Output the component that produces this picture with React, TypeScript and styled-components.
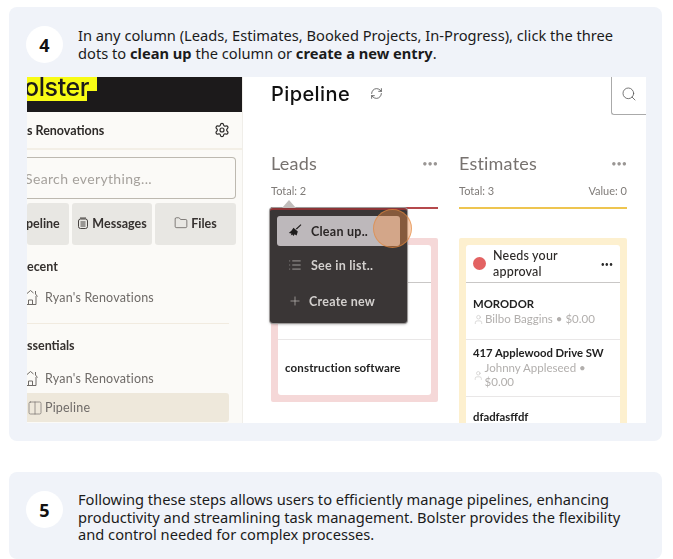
import React from 'react';
import styled, { createGlobalStyle } from 'styled-components';
import { Columns2, Folder, List, Plus, RefreshCw, Search, Settings, User } from 'lucide-react';

const GlobalStyle = createGlobalStyle`
  html, body {
    margin: 0;
    height: 559px;
    overflow: hidden;
    background: #fff;
    font-family: 'Noto Sans', sans-serif;
  }
`;

const appFont = `Lato, 'Noto Sans', sans-serif`;

const HouseIcon = () => (
  <svg width="18" height="18" viewBox="0 0 18 18" fill="none" stroke="#6f6b68" strokeWidth="1">
    <path d="M1 9 8.5 2.5l3 2.5M3 8v8.5h11V8M6.5 16.5V12h4v4.5M13.5 3v3l2 2.5" />
  </svg>
);

const BroomIcon = () => (
  <svg width="14" height="14" viewBox="0 0 14 14" fill="#1e1c1c">
    <path d="M13.4 1 8.8 5.6 7.8 4.7 12.6.3z" />
    <path d="M5.5 3.8 9.8 7.6 8.6 11.6 6.6 10.2 5.6 12 4.2 10.6 2.8 11.6 3.4 9.4.8 9 3.6 6.6z" />
  </svg>
);

const MessagesIcon = () => (
  <svg width="12" height="14" viewBox="0 0 12 14" fill="none" stroke="#35312f" strokeWidth="0.9">
    <rect x="1.5" y="3" width="9" height="9.5" rx="2" />
    <path d="M4 1v2M6 1v2M8 1v2M3.5 6h5M3.5 8h5M3.5 10h5" />
  </svg>
);

const App: React.FunctionComponent = () => (
  <Page>
    <GlobalStyle />

    <StepCard>
      <StepHeader>
        <StepNumber>4</StepNumber>
        <StepText $top={1}>
          In any column (Leads, Estimates, Booked Projects, In-Progress), click the three dots to{' '}
          <b>clean up</b> the column or <b>create a new entry</b>.
        </StepText>
      </StepHeader>

      <Shot>
        <Sidebar>
          <BrandBar>
            <BrandMark>olster</BrandMark>
          </BrandBar>
          <CompanyRow>
            <CompanyName>s Renovations</CompanyName>
            <Settings size={16} strokeWidth={1.8} color="#2c2a29" />
          </CompanyRow>
          <SearchField>Search everything...</SearchField>
          <Tabs>
            <Tab $cut>peline</Tab>
            <Tab>
              <MessagesIcon />
              Messages
            </Tab>
            <Tab>
              <Folder size={14} strokeWidth={1} />
              Files
            </Tab>
          </Tabs>
          <SectionTitle $top={14}>ecent</SectionTitle>
          <NavItem $top={13}>
            <HouseIcon />
            Ryan's Renovations
          </NavItem>
          <NavDivider />
          <SectionTitle $top={14}>ssentials</SectionTitle>
          <NavItem $top={15}>
            <HouseIcon />
            Ryan's Renovations
          </NavItem>
          <ActiveItem>
            <Columns2 size={16} strokeWidth={1} />
            Pipeline
          </ActiveItem>
        </Sidebar>

        <Main>
          <TopBar>
            <PageTitle>Pipeline</PageTitle>
            <RefreshIcon size={13} strokeWidth={1.4} color="#444" />
            <SearchButton>
              <Search size={16} strokeWidth={1.2} color="#555" />
            </SearchButton>
          </TopBar>

          <Columns>
            <Column>
              <ColumnHead>
                <ColumnTitle>Leads</ColumnTitle>
                <Dots $color="#9a9694" $size={9}>•••</Dots>
              </ColumnHead>
              <Totals>
                <span>Total: 2</span>
              </Totals>
              <ColumnRule $color="#b5494c" />
              <Lane $color="#f5d8d8" $fill={false}>
                <LaneCard>
                  <LeadRow $height={38} $line="#c9c7c6" />
                  <LeadRow $height={57} $line="#e9e7e7" />
                  <LeadRow $height={55} $line="transparent">
                    construction software
                  </LeadRow>
                </LaneCard>
              </Lane>
              <CutText>construction software</CutText>

              <Menu>
                <MenuArrow />
                <MenuActive>
                  <BroomIcon />
                  <MenuLabel $dark>Clean up..</MenuLabel>
                </MenuActive>
                <MenuItem $top={5} $gap={9}>
                  <List size={14} strokeWidth={1.2} color="#c9c5c3" />
                  <MenuLabel>See in list..</MenuLabel>
                </MenuItem>
                <MenuItem $top={8} $gap={7}>
                  <Plus size={14} strokeWidth={1.1} color="#c9c5c3" />
                  <MenuLabel>Create new</MenuLabel>
                </MenuItem>
                <Pointer />
              </Menu>
            </Column>

            <Column>
              <ColumnHead>
                <ColumnTitle>Estimates</ColumnTitle>
                <Dots $color="#9a9694" $size={9}>•••</Dots>
              </ColumnHead>
              <Totals>
                <span>Total: 3</span>
                <span>Value: 0</span>
              </Totals>
              <ColumnRule $color="#eec550" />
              <Lane $color="#fdf0cf" $fill>
                <LaneCard>
                  <LaneHead>
                    <StatusDot />
                    <LaneTitle>Needs your approval</LaneTitle>
                    <Dots $color="#2b2b2b" $size={7}>•••</Dots>
                  </LaneHead>
                  <Estimate $top={14}>
                    <EstimateName>MORODOR</EstimateName>
                    <EstimateMeta>
                      <User size={11} strokeWidth={1} />
                      <span>Bilbo Baggins • $0.00</span>
                    </EstimateMeta>
                  </Estimate>
                  <Estimate $top={6}>
                    <EstimateName>417 Applewood Drive SW</EstimateName>
                    <EstimateMeta>
                      <User size={11} strokeWidth={1} />
                      <span>Johnny Appleseed • $0.00</span>
                    </EstimateMeta>
                  </Estimate>
                  <Estimate $top={13}>
                    <EstimateName>dfadfasffdf</EstimateName>
                  </Estimate>
                </LaneCard>
              </Lane>
            </Column>
          </Columns>
        </Main>
      </Shot>
    </StepCard>

    <LastCard>
      <StepHeader>
        <StepNumber>5</StepNumber>
        <StepText $top={0}>
          Following these steps allows users to efficiently manage pipelines, enhancing productivity and
          streamlining task management. Bolster provides the flexibility and control needed for complex
          processes.
        </StepText>
      </StepHeader>
    </LastCard>
  </Page>
);

const Page = styled.div`
  padding: 7px 11px 0 9px;
`;

const StepCard = styled.section`
  background: #f0f3f9;
  border-radius: 8px;
  height: 434px;
  padding: 19px 16px 0 17px;
  box-sizing: border-box;
`;

const LastCard = styled(StepCard)`
  height: 87px;
  margin-top: 31px;
`;

const StepHeader = styled.div`
  display: flex;
  align-items: flex-start;
  gap: 15px;
  height: 51px;
`;

const StepNumber = styled.div`
  width: 37px;
  height: 37px;
  flex: none;
  border-radius: 50%;
  background: #fff;
  color: #111;
  font-size: 18px;
  font-weight: 700;
  display: flex;
  align-items: center;
  justify-content: center;
`;

const StepText = styled.p<{ $top: number }>`
  margin: ${({ $top }) => $top}px 0 0;
  color: #1b1b1b;
  font-size: 14.67px;
  line-height: 17.5px;
  max-width: 545px;
`;

const Shot = styled.div`
  display: flex;
  width: 619px;
  height: 346px;
  margin-left: 1px;
  overflow: hidden;
  background: #fff;
  font-family: ${appFont};
  filter: blur(0.3px);
`;

const Sidebar = styled.aside`
  width: 216px;
  flex: none;
  background: #fbfaf7;
  border-right: 1px solid #f0eee9;
  box-sizing: border-box;
`;

const BrandBar = styled.div`
  height: 35px;
  background: #1c1a1b;
  overflow: hidden;
`;

const BrandMark = styled.div`
  position: relative;
  isolation: isolate;
  width: 60px;
  height: 24px;
  background: #f8fb15;
  color: #1c1a1b;
  font-family: Inter, sans-serif;
  font-size: 25px;
  font-weight: 500;
  line-height: 20px;
  letter-spacing: -0.4px;
  text-indent: -3px;
  white-space: nowrap;

  &::before {
    content: '';
    position: absolute;
    z-index: -1;
    top: 0;
    left: 60px;
    width: 10px;
    height: 14px;
    background: #f8fb15;
  }
`;

const CompanyRow = styled.div`
  height: 38px;
  padding: 0 12px 0 0;
  display: flex;
  align-items: center;
  justify-content: space-between;
  border-bottom: 2px solid #f3efe6;
  color: #2d2a28;
  font-size: 12.5px;
  font-weight: 700;
  box-sizing: border-box;
`;

const CompanyName = styled.span`
  white-space: nowrap;
`;

const SearchField = styled.div`
  width: 209px;
  height: 42px;
  margin-top: 7px;
  border: 1px solid #bdb9b0;
  border-left: 0;
  border-radius: 0 4px 4px 0;
  color: #a5a19c;
  font-size: 14px;
  line-height: 42px;
  letter-spacing: 0.35px;
  text-indent: -2px;
  box-sizing: border-box;
  white-space: nowrap;
  overflow: hidden;
`;

const Tabs = styled.div`
  display: grid;
  grid-template-columns: 42px 80px 81px;
  gap: 3px;
  width: 209px;
  margin-top: 4px;
`;

const Tab = styled.div<{ $cut?: boolean }>`
  height: 42px;
  padding-bottom: 2px;
  display: flex;
  align-items: center;
  justify-content: ${({ $cut }) => ($cut ? 'flex-start' : 'center')};
  gap: 3px;
  background: #e8e7e3;
  border-radius: 3px;
  color: #35312f;
  font-size: 12.5px;
  font-weight: 700;
  box-sizing: border-box;
  text-indent: ${({ $cut }) => ($cut ? '-1px' : '0')};
`;

const SectionTitle = styled.div<{ $top: number }>`
  margin-top: ${({ $top }) => $top}px;
  color: #35312f;
  font-size: 12.5px;
  font-weight: 700;
  line-height: 16px;
`;

const NavItem = styled.div<{ $top: number }>`
  margin-top: ${({ $top }) => $top}px;
  height: 18px;
  display: flex;
  align-items: center;
  gap: 5px;
  color: #6f6b68;
  font-size: 12.5px;
  letter-spacing: 0.2px;

  svg {
    margin-left: -5px;
    flex: none;
  }
`;

const NavDivider = styled.div`
  width: 202px;
  height: 1px;
  margin-top: 17px;
  background: #f1ebe0;
`;

const ActiveItem = styled.div`
  width: 202px;
  height: 29px;
  margin-top: 6px;
  display: flex;
  align-items: center;
  gap: 2px;
  background: #eee8db;
  border-radius: 0 3px 3px 0;
  color: #6f6b68;
  font-size: 12.5px;
  letter-spacing: 0.2px;
`;

const Main = styled.main`
  flex: 1;
  min-width: 0;
  padding-left: 28px;
`;

const TopBar = styled.div`
  height: 38px;
  display: flex;
  align-items: flex-start;
  gap: 20px;
`;

const RefreshIcon = styled(RefreshCw)`
  margin-top: 10px;
`;

const PageTitle = styled.h1`
  margin: 0;
  color: #111;
  font-family: Inter, sans-serif;
  font-size: 20px;
  font-weight: 500;
  letter-spacing: 0.4px;
  line-height: 34px;
`;

const SearchButton = styled.div`
  width: 35px;
  height: 38px;
  margin-left: auto;
  padding-bottom: 4px;
  display: flex;
  align-items: center;
  justify-content: center;
  border-left: 1px solid #aaa;
  border-bottom: 1px solid #aaa;
  border-radius: 0 0 0 3px;
  box-sizing: border-box;
`;

const Columns = styled.div`
  display: grid;
  grid-template-columns: 167px 168px;
  gap: 21px;
  margin-top: 36px;
`;

const Column = styled.div`
  position: relative;
`;

const ColumnHead = styled.div`
  display: flex;
  align-items: center;
  justify-content: space-between;
  height: 24px;
`;

const ColumnTitle = styled.h2`
  margin: 0;
  color: #77726f;
  font-size: 18px;
  font-weight: 400;
  letter-spacing: 0.2px;
`;

const Dots = styled.span<{ $color: string; $size: number }>`
  flex: none;
  color: ${({ $color }) => $color};
  font-size: ${({ $size }) => $size}px;
`;

const Totals = styled.div`
  display: flex;
  justify-content: space-between;
  margin-top: 9px;
  color: #7f7b78;
  font-size: 11px;
  line-height: 14px;
`;

const ColumnRule = styled.div<{ $color: string }>`
  height: 2px;
  margin-top: 9px;
  background: ${({ $color }) => $color};
`;

const Lane = styled.div<{ $color: string; $fill: boolean }>`
  margin-top: 29px;
  padding: 7px 7px ${({ $fill }) => ($fill ? '0' : '7px')};
  background: ${({ $color }) => $color};
  border-radius: 2px;
`;

const LaneCard = styled.div`
  background: #fff;
  border-radius: 3px;
`;

const LeadRow = styled.div<{ $height: number; $line: string }>`
  height: ${({ $height }) => $height}px;
  display: flex;
  align-items: center;
  padding-left: 7px;
  border-bottom: 1px solid ${({ $line }) => $line};
  box-sizing: border-box;
  color: #222;
  font-size: 11.5px;
  font-weight: 700;
  letter-spacing: 0.15px;
`;

const CutText = styled.div`
  margin-top: 20px;
  text-align: center;
  color: #555;
  font-size: 11px;
`;

const Menu = styled.div`
  position: absolute;
  top: 57px;
  left: -1px;
  width: 137px;
  height: 115px;
  background: #3a3636;
  border-top: 2px solid #8c3436;
  border-radius: 3px;
  box-shadow: 0 0 0 1px #9d9a99, 0 1px 3px rgba(0, 0, 0, 0.4);
  box-sizing: border-box;
  padding: 6px 7px;
`;

const MenuArrow = styled.div`
  position: absolute;
  top: -10px;
  left: 12px;
  border-left: 7px solid transparent;
  border-right: 7px solid transparent;
  border-bottom: 8px solid #c1bdbb;
`;

const MenuActive = styled.div`
  height: 30px;
  padding-left: 11px;
  display: flex;
  align-items: center;
  gap: 9px;
  background: #bdb8bb;
  border-radius: 3px;
`;

const MenuItem = styled.div<{ $top: number; $gap: number }>`
  height: 28px;
  margin-top: ${({ $top }) => $top}px;
  padding-left: 11px;
  display: flex;
  align-items: center;
  gap: ${({ $gap }) => $gap}px;
`;

const MenuLabel = styled.span<{ $dark?: boolean }>`
  color: ${({ $dark }) => ($dark ? '#2a2626' : '#d3d0ce')};
  font-size: 12.5px;
  font-weight: 700;
  letter-spacing: 0.25px;
`;

const Pointer = styled.div`
  position: absolute;
  top: -1px;
  left: 103px;
  width: 39px;
  height: 39px;
  border-radius: 50%;
  background: rgba(240, 140, 70, 0.42);
  border: 1.5px solid rgba(225, 135, 60, 0.6);
  box-sizing: border-box;
`;

const LaneHead = styled.div`
  height: 38px;
  display: flex;
  align-items: center;
  gap: 7px;
  padding: 0 7px;
  border-bottom: 1px solid #c9c7c6;
  box-sizing: border-box;
`;

const StatusDot = styled.span`
  width: 13px;
  height: 13px;
  flex: none;
  border-radius: 50%;
  background: #e36262;
`;

const LaneTitle = styled.div`
  flex: 1;
  color: #2d2a28;
  font-size: 12.5px;
  font-weight: 500;
  line-height: 16px;
  letter-spacing: 0.2px;
`;

const Estimate = styled.div<{ $top: number }>`
  min-height: 57px;
  padding: ${({ $top }) => $top}px 7px 0;
  border-bottom: 1px solid #e9e7e7;
  box-sizing: border-box;
`;

const EstimateName = styled.div`
  color: #222;
  font-size: 11.3px;
  font-weight: 700;
  line-height: 14px;
`;

const EstimateMeta = styled.div`
  display: flex;
  align-items: center;
  gap: 1px;
  margin-top: 1px;
  color: #b2afad;
  font-size: 11.5px;
  line-height: 14px;
`;

export default App;
